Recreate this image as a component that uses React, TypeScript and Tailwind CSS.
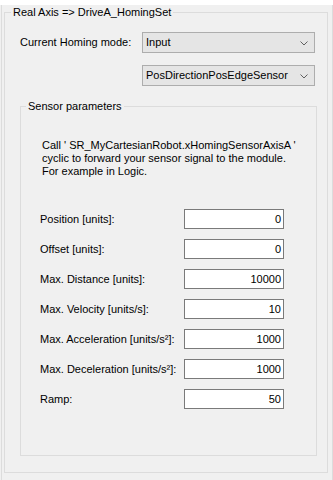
import React from 'react'

const fields = [
  { label: 'Position [units]:', value: '0' },
  { label: 'Offset [units]:', value: '0' },
  { label: 'Max. Distance [units]:', value: '10000' },
  { label: 'Max. Velocity [units/s]:', value: '10' },
  { label: 'Max. Acceleration [units/s²]:', value: '1000' },
  { label: 'Max. Deceleration [units/s²]:', value: '1000' },
  { label: 'Ramp:', value: '50' }
]

function Combo({ text }: { text: string }) {
  return (
    <div className="w-[173px] h-[21px] bg-[#e5e5e5] border border-[#adadad] flex items-center justify-between pl-[3px] pr-[6px]">
      <span>{text}</span>
      <svg width="8" height="5" viewBox="0 0 8 5" className="mt-[1px]">
        <path d="M0.5 0.5 L4 4 L7.5 0.5" fill="none" stroke="#606060" strokeWidth="1" />
      </svg>
    </div>
  )
}

export default function App() {
  return (
    <div className="w-[333px] h-[480px] bg-[#f0f0f0] text-[11px] leading-[13px] text-black" style={{ fontFamily: '"Liberation Sans", Arial, sans-serif' }}>
      <div className="ml-[1px] w-[332px] h-[480px] border-l border-r border-b border-[#dcdcdc]">
        <fieldset className="ml-[2px] mt-[5px] w-[324px] h-[468px] border border-[#dcdcdc]">
          <legend className="ml-[6px] px-[2px] leading-[14px]">Real Axis =&gt; DriveA_HomingSet</legend>

          {/* Homing mode */}
          <div className="mt-[13px] pl-[15px] flex items-center">
            <span className="w-[122px]">Current Homing mode:</span>
            <Combo text="Input" />
          </div>
          <div className="mt-[12px] pl-[137px]">
            <Combo text="PosDirectionPosEdgeSensor" />
          </div>

          {/* Sensor parameters */}
          <fieldset className="ml-[15px] mt-[13px] w-[297px] h-[357px] border border-[#dcdcdc]">
            <legend className="ml-[5px] px-[2px] leading-[14px]">Sensor parameters</legend>
            <p className="mt-[26px] pl-[21px]">
              Call ' SR_MyCartesianRobot.xHomingSensorAxisA '<br />
              cyclic to forward your sensor signal to the module.<br />
              For example in Logic.
            </p>
            <div className="mt-[31px] pl-[19px] flex flex-col gap-[10px]">
              {fields.map(f => (
                <div key={f.label} className="flex items-center">
                  <span className="w-[144px]">{f.label}</span>
                  <div className="w-[100px] h-[20px] bg-white border border-[#7a7a7a] flex items-center justify-end pr-[2px]">
                    {f.value}
                  </div>
                </div>
              ))}
            </div>
          </fieldset>
        </fieldset>
      </div>
    </div>
  )
}
